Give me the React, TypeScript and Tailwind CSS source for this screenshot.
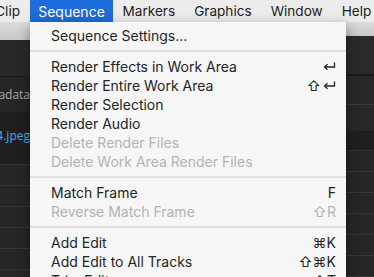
import React from 'react';

type Item = { label?: string; keys?: React.ReactNode; disabled?: boolean; sep?: boolean };

const ReturnIcon = () => (
  <svg width="13" height="9" viewBox="0 0 13 9" className="inline-block">
    <path d="M11.5 0.5 V5 H2" fill="none" stroke="currentColor" strokeWidth="1.3" />
    <path d="M4.5 2.3 L1.5 5 L4.5 7.7" fill="none" stroke="currentColor" strokeWidth="1.3" />
  </svg>
);

const items: Item[] = [
  { label: 'Sequence Settings...' },
  { sep: true },
  { label: 'Render Effects in Work Area', keys: <ReturnIcon /> },
  { label: 'Render Entire Work Area', keys: <><span className="mr-[2px]">⇧</span><ReturnIcon /></> },
  { label: 'Render Selection' },
  { label: 'Render Audio' },
  { label: 'Delete Render Files', disabled: true },
  { label: 'Delete Work Area Render Files', disabled: true },
  { sep: true },
  { label: 'Match Frame', keys: 'F' },
  { label: 'Reverse Match Frame', keys: '⇧R', disabled: true },
  { sep: true },
  { label: 'Add Edit', keys: '⌘K' },
  { label: 'Add Edit to All Tracks', keys: '⇧⌘K' },
  { label: 'Trim Edit', keys: '⇧T' },
];

const menus = ['Markers', 'Graphics', 'Window', 'Help'];

export default function App() {
  return (
    <div className="relative w-[374px] h-[277px] overflow-hidden bg-[#282828] font-['Inter',sans-serif]">
      {/* menu bar */}
      <div className="flex h-[22px] bg-[#ececec] text-[13.6px] text-[#222] whitespace-nowrap">
        <div className="w-[30px] shrink-0 flex items-center justify-end pr-[10px] overflow-hidden">Clip</div>
        <div className="w-[83px] shrink-0 flex items-center justify-center bg-[#1d6cdb] text-white text-[14px]">
          Sequence
        </div>
        {menus.map((m) => (
          <div key={m} className="flex items-center px-[9.5px]">
            {m}
          </div>
        ))}
      </div>

      {/* app window behind */}
      <div className="flex h-[255px]">
        <div className="w-[30px] flex flex-col">
          <div className="h-[18px] bg-gradient-to-b from-[#dadada] to-[#c9c9c9]" />
          <div className="h-[37px] bg-[#292929] border-b border-[#1c1c1c]" />
          <div className="h-[36px] bg-[#262626] border-b border-[#1c1c1c] flex items-center text-[12px] text-[#a9a9a9] font-['Open_Sans',sans-serif] whitespace-nowrap justify-end">
            adata
          </div>
          <div className="h-[52px] bg-[#1f1f1f] border-b border-[#333] pt-[14px] text-[12px] text-[#4ea6ec] font-['Open_Sans',sans-serif] whitespace-nowrap flex justify-end">
            4.jpeg
          </div>
          {[0, 1, 2, 3, 4].map((i) => (
            <div key={i} className="h-[21px] bg-[#262626] border-b border-[#363636]" />
          ))}
        </div>
        <div className="flex-1 flex flex-col">
          <div className="h-[16px] bg-gradient-to-b from-[#dadada] to-[#c9c9c9]" />
          <div className="h-[42px] bg-[#2a2a2a]" />
          <div className="h-[3px] bg-[#1a1a1a]" />
          <div className="h-[32px] bg-[#282828] border-b border-[#3a3a3a]" />
          <div className="h-[30px] bg-[#282828]" />
          <div className="h-[22px] bg-[#1f1f1f] border-b border-[#333]" />
          {[0, 1, 2, 3, 4, 5].map((i) => (
            <div key={i} className="h-[21px] bg-[#262626] border-b border-[#363636] shrink-0" />
          ))}
        </div>
      </div>

      {/* dropdown */}
      <div className="absolute left-[30px] top-[22px] w-[316px] bg-[#f6f6f6] pt-[4px] pb-[4px] text-[14px] text-[#242424] shadow-[0_4px_12px_rgba(0,0,0,0.4)]">
        {items.map((it, i) =>
          it.sep ? (
            <div key={i} className="py-[5px]">
              <div className="h-[2px] bg-[#e1e1e1]" />
            </div>
          ) : (
            <div
              key={i}
              className={
                'flex items-center justify-between h-[19px] pl-[21px] pr-[10px] ' +
                (it.disabled ? 'text-[#b3b3b3]' : '')
              }
            >
              <span>{it.label}</span>
              <span className="flex items-center">{it.keys}</span>
            </div>
          )
        )}
      </div>
    </div>
  );
}
